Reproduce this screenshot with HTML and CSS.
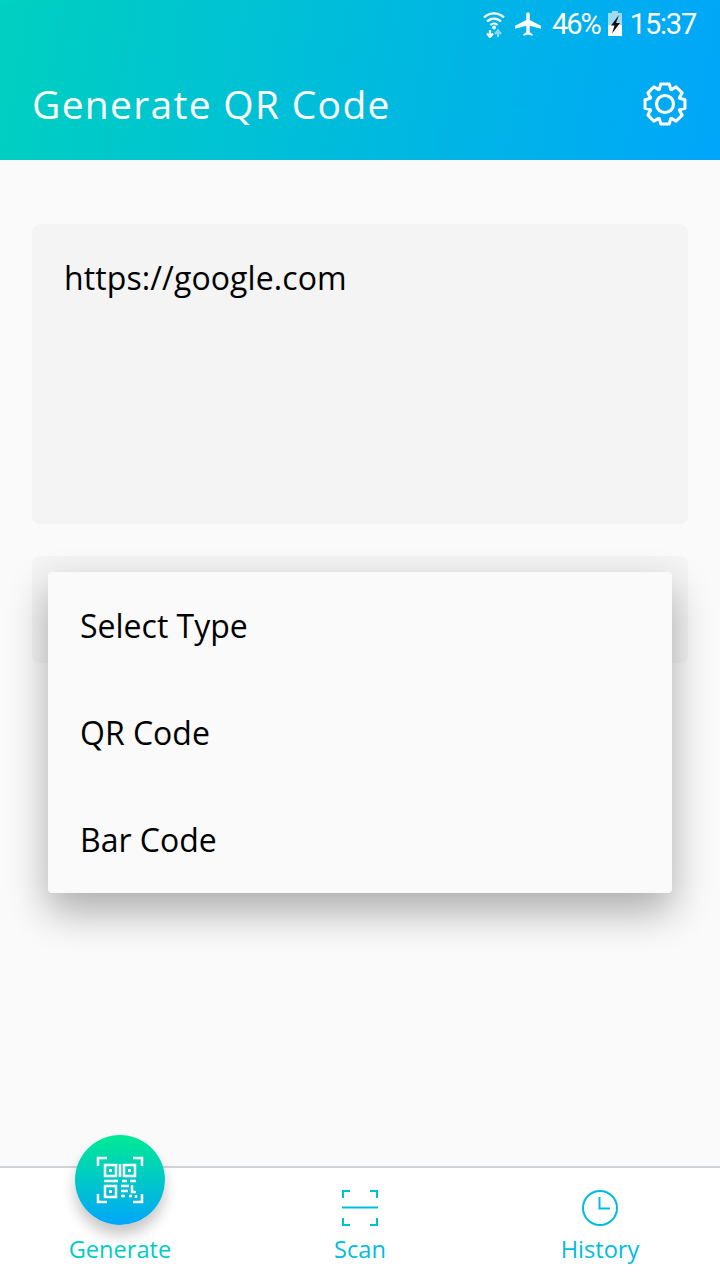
FILE: index.html
```html
<!DOCTYPE html>
<html>
<head>
    <title>Generate QR Code</title>
    <link rel="stylesheet" href="styles.css">
</head>
<body>
    <header class="app-header">
        <div class="status-bar">
            <svg class="wifi-icon" width="24" height="28" viewBox="0 0 24 28">
                <g fill="none" stroke="#fff" stroke-width="2.200">
                    <path d="M2 7.500a14 14 0 0 1 20 0"/>
                    <path d="M5 11.500a10 10 0 0 1 14 0"/>
                    <path d="M8.500 15a5 5 0 0 1 7 0"/>
                </g>
                <circle cx="12" cy="17.500" r="2" fill="#fff"/>
                <path d="M8 20v6M5 23.500l3 3.500 3-3.500" fill="none" stroke="#fff" stroke-width="2.200"/>
                <path d="M16 27v-6M13 24l3-3.500 3 3.500" fill="none" stroke="#8fd8f5" stroke-width="2.200"/>
            </svg>
            <svg class="plane-icon" width="28" height="28" viewBox="0 0 24 24">
                <path fill="#fff" d="M23 16v-2.500l-9.500-5V3.500a1.500 1.500 0 0 0-3 0v5L1 13.500V16l9.500-2.500V19L8 20.800V22l4-1 4 1v-1.200L13.500 19v-5.500z"/>
            </svg>
            <span class="battery-text">46%</span>
            <svg class="battery-icon" width="16" height="26" viewBox="0 0 16 26">
                <rect x="5" y="0" width="6" height="3" fill="#9edcf6"/>
                <rect x="1" y="2" width="14" height="12" fill="#9edcf6"/>
                <rect x="1" y="14" width="14" height="11" fill="#fff"/>
                <path fill="#111" d="M12 4 4 14.500h3.500L5 22.500l8-10.500H9z"/>
            </svg>
            <span class="clock">15:37</span>
        </div>
        <div class="toolbar">
            <h1>Generate QR Code</h1>
            <svg class="settings-icon" width="46" height="46" viewBox="0 0 46 46">
                <path fill="none" stroke="#fff" stroke-width="3.200" stroke-linejoin="round" transform="translate(23 23) scale(.95)" d="M-6-15.500-4.500-21H4.500L6-15.500 6.720-15.200 11.670-18.030 18.030-11.670 15.200-6.720 15.500-6 21-4.500V4.500L15.500 6 15.200 6.720 18.030 11.670 11.670 18.030 6.720 15.200 6 15.500 4.500 21H-4.500L-6 15.500-6.720 15.200-11.670 18.030-18.030 11.670-15.200 6.720-15.500 6-21 4.500V-4.500L-15.500-6-15.200-6.720-18.030-11.670-11.670-18.030-6.720-15.200z"/>
                <circle cx="23" cy="23" r="8.500" fill="none" stroke="#fff" stroke-width="3.200"/>
            </svg>
        </div>
    </header>

    <main class="content">
        <div class="text-box">https://google.com</div>
        <div class="select-wrap">
            <div class="select-box"></div>
            <ul class="dropdown">
                <li>Select Type</li>
                <li>QR Code</li>
                <li>Bar Code</li>
            </ul>
        </div>
    </main>

    <nav class="bottom-nav">
        <div class="nav-item nav-generate">
            <div class="fab">
                <svg width="48" height="48" viewBox="0 0 48 48" fill="none" stroke="#fff" stroke-width="2.500">
                    <path d="M2 10V2h9M37 2h9v8M2 38v8h9M46 38v8h-9"/>
                    <rect x="9" y="9" width="11" height="11"/>
                    <rect x="28" y="9" width="11" height="11"/>
                    <rect x="9" y="30" width="11" height="11"/>
                    <path d="M24 8v13M8 25h14M26 25h5M34 25h6M25 30h8M36 29v7h4M25 35h7M25 40h4M33 40h3M40 39v3"/>
                    <rect x="13" y="13" width="3" height="3" fill="#fff" stroke="none"/>
                    <rect x="32" y="13" width="3" height="3" fill="#fff" stroke="none"/>
                    <rect x="13" y="34" width="3" height="3" fill="#fff" stroke="none"/>
                </svg>
            </div>
            <span class="nav-label">Generate</span>
        </div>
        <div class="nav-item">
            <svg class="nav-icon" width="38" height="38" viewBox="0 0 38 38" fill="none" stroke="#00bde0" stroke-width="2">
                <path d="M2 9V2h7M29 2h7v7M2 29v7h7M36 29v7h-7"/>
                <path d="M1 18.500h36"/>
            </svg>
            <span class="nav-label">Scan</span>
        </div>
        <div class="nav-item">
            <svg class="nav-icon" width="38" height="38" viewBox="0 0 38 38" fill="none" stroke="#00bde0" stroke-width="2">
                <circle cx="19" cy="19" r="17"/>
                <path d="M18.500 8v11.500H29"/>
            </svg>
            <span class="nav-label">History</span>
        </div>
    </nav>
</body>
</html>
```

FILE: styles.css
```css
* {
    box-sizing: border-box;
}

body {
    font-family: "Open Sans", "Noto Sans", sans-serif;
    margin: 0;
    padding: 0;
    width: 720px;
    height: 1280px;
    display: flex;
    flex-direction: column;
    background-color: #fafafa;
    overflow: hidden;
}

.app-header {
    height: 160px;
    background: linear-gradient(100deg, #00d0c0 0%, #00a6fa 100%);
    color: #fff;
}

.status-bar {
    height: 48px;
    padding: 0 24px 0 0;
    display: flex;
    justify-content: flex-end;
    align-items: center;
    font-family: Roboto, sans-serif;
    font-size: 29px;
    letter-spacing: -1.2px;
}

.wifi-icon {
    margin-right: 8px;
}

.plane-icon {
    margin-right: 10px;
}

.battery-text {
    margin-right: 7px;
    letter-spacing: -2px;
}

.battery-icon {
    margin-right: 7px;
}

.toolbar {
    height: 112px;
    padding: 0 32px;
    display: flex;
    justify-content: space-between;
    align-items: center;
}

.toolbar h1 {
    margin: 0 0 2px;
    font-size: 39px;
    font-weight: 400;
    letter-spacing: 1.3px;
}

.content {
    flex: 1;
    padding: 64px 32px 0;
}

.text-box {
    height: 300px;
    padding: 32px;
    background-color: #f4f4f4;
    border-radius: 8px;
    font-size: 32px;
    line-height: 44px;
    letter-spacing: 0.1px;
    color: #000;
}

.select-wrap {
    position: relative;
    margin-top: 32px;
}

.select-box {
    height: 107px;
    background-color: #f4f4f4;
    border-radius: 8px;
}

.dropdown {
    position: absolute;
    top: 16px;
    left: 16px;
    right: 16px;
    margin: 0;
    padding: 0;
    list-style: none;
    background-color: #fafafa;
    border-radius: 4px;
    box-shadow: 0 18px 40px rgba(0,0,0,0.32);
}

.dropdown li {
    height: 107px;
    padding: 0 32px;
    display: flex;
    align-items: center;
    font-size: 32px;
    color: #000;
}

.bottom-nav {
    height: 114px;
    background-color: #fff;
    border-top: 2px solid #d0d4d8;
    display: flex;
}

.nav-item {
    flex: 1;
    position: relative;
    display: flex;
    flex-direction: column;
    align-items: center;
    padding-top: 21px;
}

.nav-icon {
    display: block;
}

.nav-label {
    position: absolute;
    top: 65px;
    font-size: 23.6px;
    line-height: 32px;
    color: #00bde0;
}

.nav-generate .nav-label {
    color: #00ccc4;
}

.fab {
    position: absolute;
    top: -33px;
    width: 90px;
    height: 90px;
    border-radius: 50%;
    background: linear-gradient(180deg, #00ea94 0%, #00a6fa 100%);
    box-shadow: 0 10px 14px rgba(0,0,0,0.22);
    display: flex;
    justify-content: center;
    align-items: center;
}
```
